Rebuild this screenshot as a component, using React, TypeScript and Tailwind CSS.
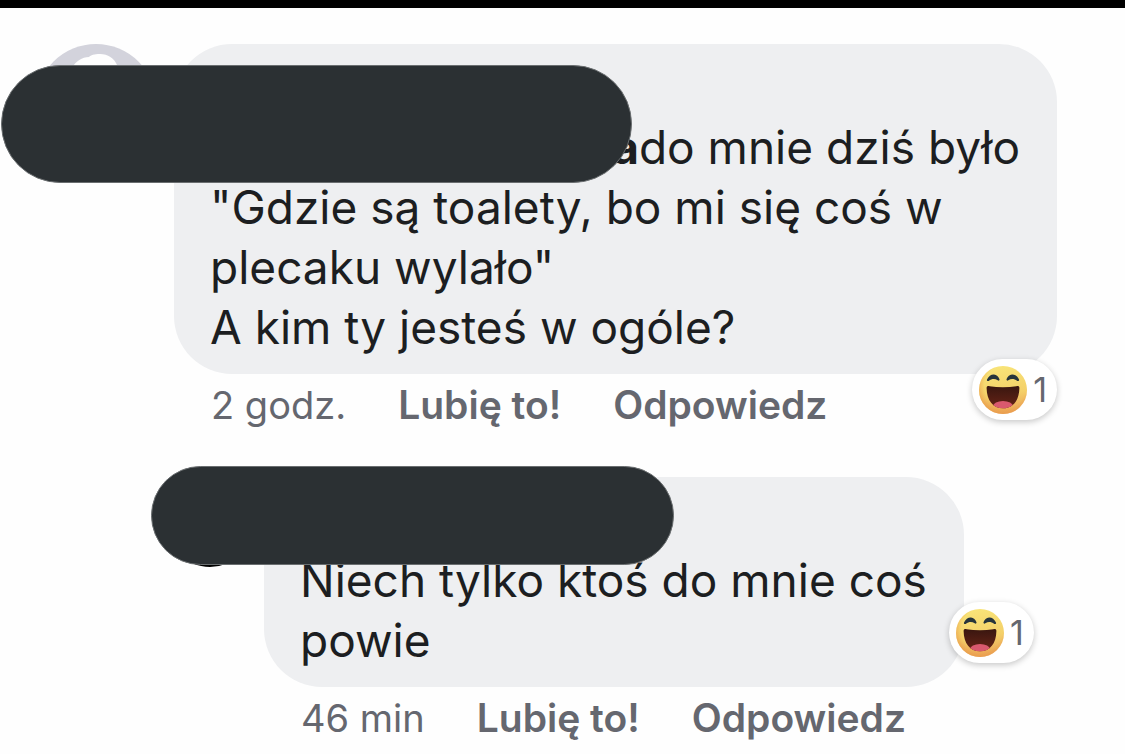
import React from "react";

type FaceProps = { id: string };

function LaughingFace({ id }: FaceProps) {
  return (
    <svg viewBox="0 0 48 48" className="size-12 shrink-0" role="img" aria-label="Ha ha">
      <defs>
        <linearGradient id={`${id}-skin`} x1="0.4" y1="0" x2="0.6" y2="1">
          <stop offset="0" stopColor="#f8e478" />
          <stop offset="0.6" stopColor="#f4d069" />
          <stop offset="1" stopColor="#eba255" />
        </linearGradient>
        <radialGradient id={`${id}-rim`} cx="0.55" cy="0.42" r="0.58">
          <stop offset="0.75" stopColor="#eda04f" stopOpacity="0" />
          <stop offset="1" stopColor="#e99a4a" stopOpacity="0.7" />
        </radialGradient>
        <linearGradient id={`${id}-mouth`} x1="0" y1="0" x2="0" y2="1">
          <stop offset="0" stopColor="#35150f" />
          <stop offset="1" stopColor="#6b2517" />
        </linearGradient>
        <clipPath id={`${id}-clip`}>
          <path d="M7.600 22C7.600 20.300 8.800 19.800 10.600 20.200C19 21.600 29 21.600 37.400 20.200C39.200 19.800 40.400 20.300 40.400 22C40.200 34.500 34 42.300 24 42.300S7.800 34.500 7.600 22Z" />
        </clipPath>
      </defs>
      <circle cx="24" cy="24" r="24" fill={`url(#${id}-skin)`} />
      <circle cx="24" cy="24" r="24" fill={`url(#${id}-rim)`} />
      <g clipPath={`url(#${id}-clip)`}>
        <rect x="6" y="18" width="36" height="26" fill={`url(#${id}-mouth)`} />
        <ellipse cx="24" cy="40.500" rx="10" ry="5.500" fill="#d9596e" />
      </g>
      <path d="M8 13.500C9.500 10 12.300 8.200 15 8.400C17.600 8.600 19.600 10.600 20.500 13.300C20.700 14.600 19.600 15 18.700 14.300C15.600 12.300 13 12.600 9.700 14.900C8.600 15.500 7.600 14.700 8 13.500Z" fill="#26343b" />
      <path d="M40 13.500C38.500 10 35.700 8.200 33 8.400C30.400 8.600 28.400 10.600 27.500 13.300C27.300 14.600 28.400 15 29.300 14.300C32.400 12.300 35 12.600 38.300 14.900C39.400 15.500 40.400 14.700 40 13.500Z" fill="#26343b" />
    </svg>
  );
}

function Reaction({ id, count }: FaceProps & { count: number }) {
  return (
    <button
      type="button"
      className="flex h-[61px] items-center gap-1.5 rounded-full bg-white pr-2.5 pl-[7px] text-[34px] leading-none text-[#65676f] shadow-[0_2px_6px_rgba(0,0,0,0.22)]"
    >
      <LaughingFace id={id} />
      <span>{count}</span>
    </button>
  );
}

function Actions({ time }: { time: string }) {
  return (
    <footer className="flex h-[61px] items-center pl-[37px] text-[38px] leading-none whitespace-nowrap text-[#65676f]">
      <time>{time}</time>
      <button type="button" className="ml-[52px] text-[39px] leading-none font-semibold">
        Lubię to!
      </button>
      <button type="button" className="ml-[52px] text-[39px] leading-none font-semibold">
        Odpowiedz
      </button>
    </footer>
  );
}

export default function App() {
  return (
    <main className="min-h-screen border-t-8 border-black bg-[#fefefe] pt-9 font-['Inter',sans-serif] text-[#1c1e21]">
      <article className="relative flex items-start gap-[18px] pr-[68px] pl-9">
        <svg viewBox="0 0 120 120" className="size-[120px] shrink-0" aria-hidden="true">
          <circle cx="60" cy="60" r="60" fill="#d3d3dc" />
          <path d="M36 24C40 17 46 13 53 13c2-2 5-3 11-3 8 0 14 4 17 11l2 9v32H36Z" fill="#fefefe" />
        </svg>
        <div className="min-w-0 flex-1">
          <div className="relative rounded-[58px] bg-[#eeeff1] pt-[13px] pr-[37px] pb-[17px] pl-9 text-[46px] leading-[60px] whitespace-nowrap">
            <div className="h-[60px]" />
            <p className="text-right">
              <b>a</b>do mnie dziś było
            </p>
            <p>"Gdzie są toalety, bo mi się coś w</p>
            <p>plecaku wylało"</p>
            <p>A kim ty jesteś w ogóle?</p>
            <div className="absolute right-0 -bottom-[46px]">
              <Reaction id="first" count={1} />
            </div>
          </div>
          <Actions time="2 godz." />
        </div>
        <div className="absolute top-[21px] left-px h-[118px] w-[631px] rounded-full border border-[#6a6e70] bg-[#2b3033]" />
      </article>

      <article className="relative mt-[42px] flex items-start gap-[9px] pl-[165px]">
        <div className="size-[90px] shrink-0 rounded-full bg-black" />
        <div>
          <div className="relative w-fit rounded-[58px] bg-[#eeeff1] pt-[13px] pr-[37px] pb-[17px] pl-9 text-[46px] leading-[60px] whitespace-nowrap">
            <div className="h-[60px]" />
            <p>Niech tylko ktoś do mnie coś</p>
            <p>powie</p>
            <div className="absolute -right-[70px] bottom-6">
              <Reaction id="second" count={1} />
            </div>
          </div>
          <Actions time="46 min" />
        </div>
        <div className="absolute -top-[11px] left-[151px] h-[99px] w-[523px] rounded-full border border-[#6a6e70] bg-[#2b3033]" />
      </article>
    </main>
  );
}
